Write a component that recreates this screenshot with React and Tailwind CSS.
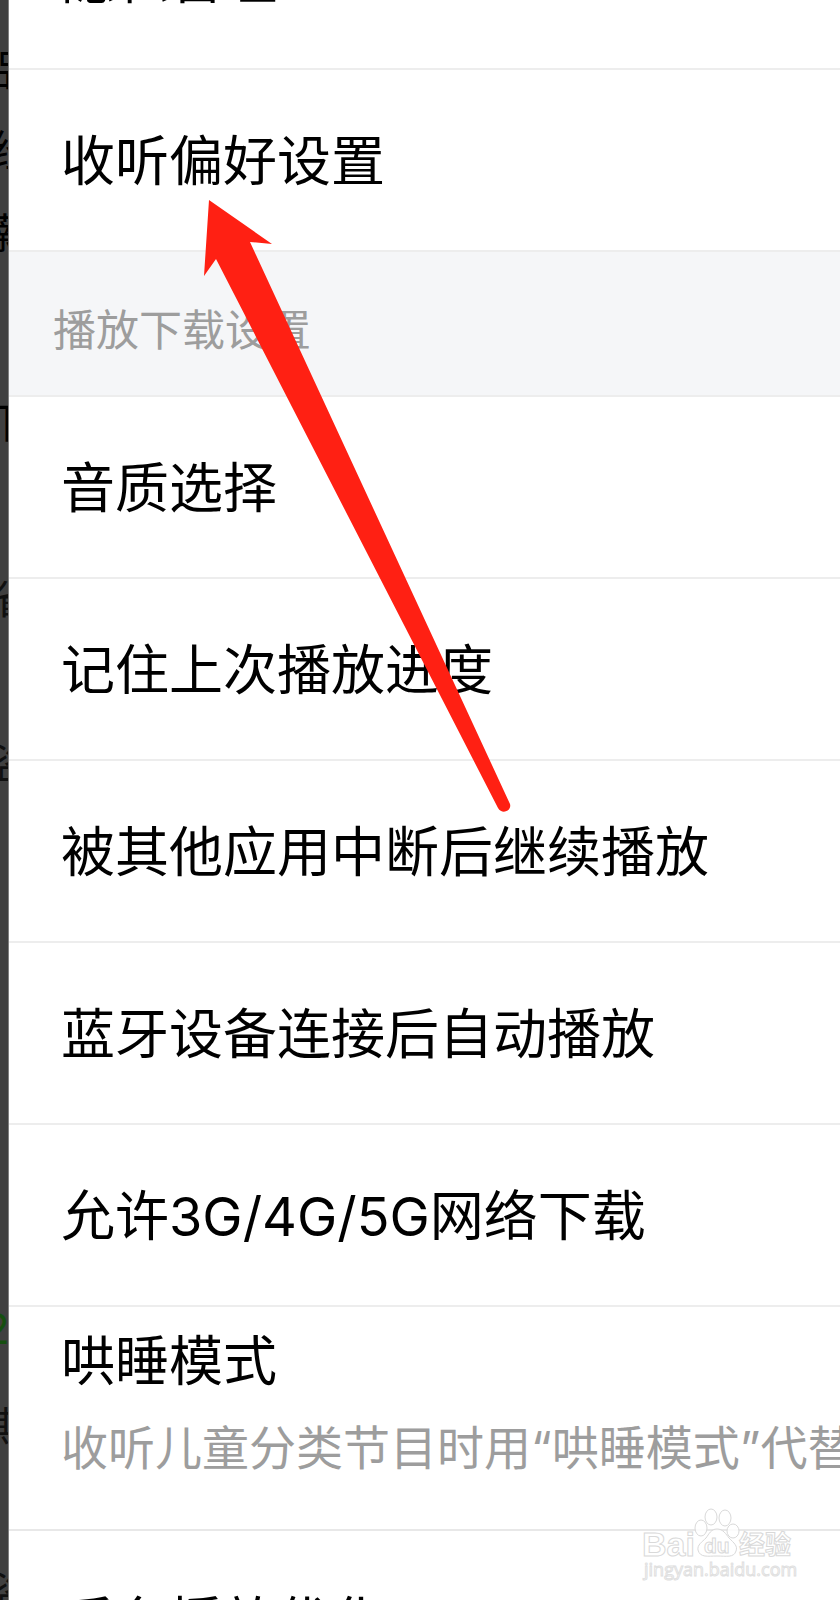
import React from 'react';

const rows = [
  '音质选择',
  '记住上次播放进度',
  '被其他应用中断后继续播放',
  '蓝牙设备连接后自动播放',
  '允许3G/4G/5G网络下载',
];

// Slices of the page that stays behind the panel
const behind = [
  { text: '品', top: 'top-[50px]', left: '-left-[9px]', color: 'text-black' },
  { text: '经', top: 'top-[130px]', left: '-left-[9px]', color: 'text-black' },
  { text: '薪', top: 'top-[213px]', left: '-left-[9px]', color: 'text-black' },
  { text: '下', top: 'top-[402px]', left: '-left-[13px]', color: 'text-black' },
  { text: '省', top: 'top-[578px]', left: '-left-[7px]', color: 'text-[#101010]' },
  { text: '盗', top: 'top-[742px]', left: '-left-[7px]', color: 'text-[#101010]' },
  { text: '2', top: 'top-[1308px]', left: '-left-[16px]', color: 'text-[#164f10]' },
  { text: '期', top: 'top-[1406px]', left: '-left-[12px]', color: 'text-[#101010]' },
  { text: '盗', top: 'top-[1570px]', left: '-left-[7px]', color: 'text-[#101010]' },
];

const Row = ({ children }) => (
  <li className="h-[182px] border-b-2 border-[#ededed]">
    <button type="button" className="flex h-full w-full items-center pl-[52px] pt-[3px] text-left">
      {children}
    </button>
  </li>
);

const Backdrop = () => (
  <div className="relative w-[9px] shrink-0 overflow-hidden border-r border-[#808080] bg-[#404040]">
    {behind.map((item, i) => (
      <span key={i} className={`absolute text-[42px] leading-[42px] ${item.top} ${item.left} ${item.color}`}>
        {item.text}
      </span>
    ))}
  </div>
);

const Arrow = () => (
  <svg className="absolute left-[200px] top-[198px]" width="320" height="620" viewBox="200 198 320 620" fill="#ff2013">
    <path d="M209 200 L272 244 L250 242 L510 804 C512 811 502 815 498 808 L216 259 L204 276 Z" />
  </svg>
);

const Watermark = () => (
  <svg
    className="absolute bottom-[16px] right-[42px]"
    width="158"
    height="80"
    viewBox="0 0 158 80"
    fill="#ffffff"
    fillOpacity="0.8"
    stroke="#d9d9d9"
    strokeWidth="1"
    fontFamily="'Liberation Sans', 'Noto Sans CJK SC', sans-serif"
  >
    <text x="2" y="52" fontSize="34" fontWeight="700">Bai</text>
    <ellipse cx="61" cy="24" rx="6" ry="8" />
    <ellipse cx="71" cy="13" rx="6" ry="8" />
    <ellipse cx="85" cy="14" rx="6" ry="8" />
    <ellipse cx="93" cy="27" rx="6" ry="7" />
    <path d="M77 25 C83 25 86 30 89 34 C94 39 98 42 96 47 C94 54 86 52 77 52 C68 52 60 54 58 46 C57 41 62 38 66 34 C69 30 71 25 77 25 Z" />
    <text x="64" y="49" fontSize="21" fontWeight="700">du</text>
    <text x="99" y="50" fontSize="26" fontWeight="700">经验</text>
    <text x="4" y="72" fontSize="18" stroke="#e0e0e0" fontFamily="'Open Sans', sans-serif">jingyan.baidu.com</text>
  </svg>
);

const App = () => {
  return (
    <div className="relative flex h-screen overflow-hidden bg-white font-[Inter,'Noto_Sans_CJK_SC',sans-serif] text-[54px] leading-[78px] text-black">
      <Backdrop />
      <main className="-mt-[112px] min-w-0 flex-1 overflow-hidden whitespace-nowrap">
        <ul>
          <Row>隐私管理</Row>
          <Row>收听偏好设置</Row>
        </ul>
        <h2 className="h-[145px] border-b-2 border-[#ededed] bg-[#f5f6f8] pl-[44px] pt-[46px] text-[43px] leading-[64px] text-[#9d9d9d]">
          播放下载设置
        </h2>
        <ul>
          {rows.map((title) => (
            <Row key={title}>{title}</Row>
          ))}
          <li className="h-[224px] border-b-2 border-[#e8e8e8]">
            <button type="button" className="flex h-full w-full flex-col pl-[52px] pt-[16px] text-left">
              <span>哄睡模式</span>
              <span className="mt-[12px] text-[47px] leading-[70px] text-[#9d9d9d]">
                收听儿童分类节目时用“哄睡模式”代替
              </span>
            </button>
          </li>
          <Row>后台播放优化</Row>
        </ul>
      </main>
      <Arrow />
      <Watermark />
    </div>
  );
};

export default App;
